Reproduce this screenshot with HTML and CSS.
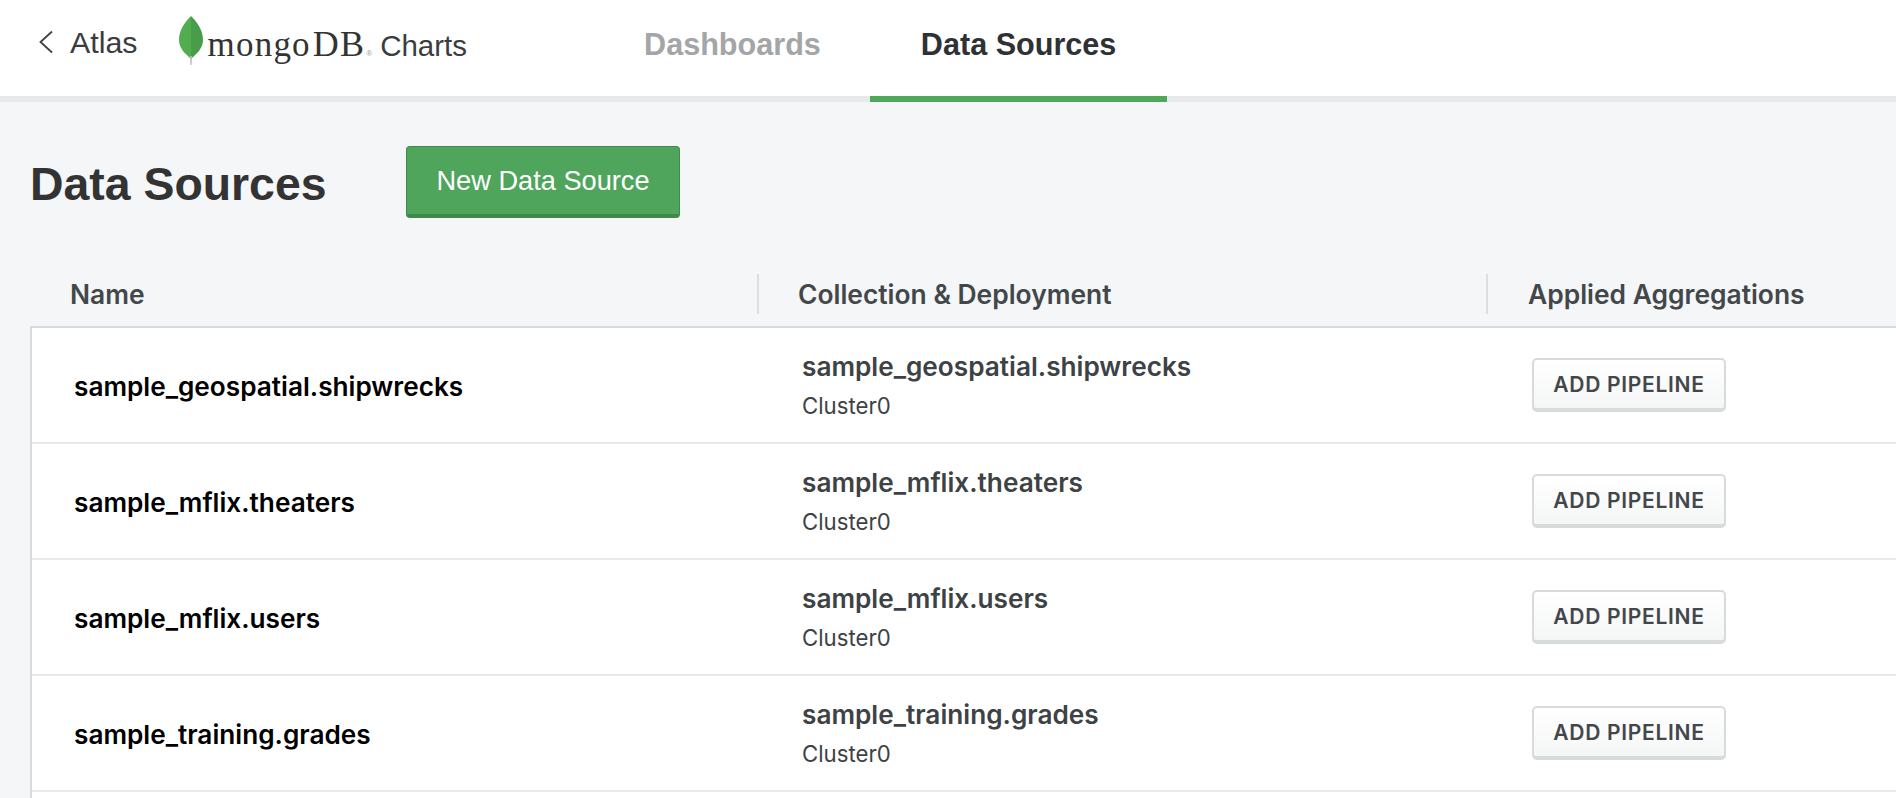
FILE: index.html
```html
<!DOCTYPE html>
<html lang="en">
<head>
    <meta charset="UTF-8">
    <title>Data Sources - MongoDB Charts</title>
    <link rel="stylesheet" href="styles.css">
</head>
<body>
    <header class="topbar">
        <a class="back-link">
            <svg class="back-icon" width="14" height="24" viewBox="0 0 14 24"><path d="M13 1.5 L1.5 12 L13 22.5" fill="none" stroke="#3d4245" stroke-width="1.8"/></svg>
            <span>Atlas</span>
        </a>
        <div class="logo">
            <svg class="leaf" width="24" height="50" viewBox="0 0 24 50">
                <path d="M12 0 C17 5 24 13 24 24 C24 33 17 38 13 42 L12 42 Z" fill="#499d4a"/>
                <path d="M12 0 C7 5 0 13 0 24 C0 33 7 38 11 42 L12 42 Z" fill="#52ad50"/>
                <path d="M11 40 L13 40 L12.5 49 L11.5 49 Z" fill="#b5b8b6"/>
            </svg>
            <span class="logo-word">mongo<span class="logo-db">DB</span></span><span class="logo-reg">®</span>
            <span class="logo-product">Charts</span>
        </div>
        <nav class="tabs">
            <a class="tab">Dashboards</a>
            <a class="tab tab-active">Data Sources</a>
        </nav>
    </header>

    <main class="page">
        <div class="title-row">
            <h1>Data Sources</h1>
            <button class="btn-new">New Data Source</button>
        </div>

        <div class="table-head">
            <div class="head-cell">Name</div>
            <div class="head-cell head-sep">Collection &amp; Deployment</div>
            <div class="head-cell head-sep">Applied Aggregations</div>
        </div>

        <div class="table-body">
            <div class="row">
                <div class="name">sample_geospatial.shipwrecks</div>
                <div class="coll">
                    <div class="coll-name">sample_geospatial.shipwrecks</div>
                    <div class="coll-cluster">Cluster0</div>
                </div>
                <div class="action"><button class="btn-pipeline">ADD PIPELINE</button></div>
            </div>
            <div class="row">
                <div class="name">sample_mflix.theaters</div>
                <div class="coll">
                    <div class="coll-name">sample_mflix.theaters</div>
                    <div class="coll-cluster">Cluster0</div>
                </div>
                <div class="action"><button class="btn-pipeline">ADD PIPELINE</button></div>
            </div>
            <div class="row">
                <div class="name">sample_mflix.users</div>
                <div class="coll">
                    <div class="coll-name">sample_mflix.users</div>
                    <div class="coll-cluster">Cluster0</div>
                </div>
                <div class="action"><button class="btn-pipeline">ADD PIPELINE</button></div>
            </div>
            <div class="row">
                <div class="name">sample_training.grades</div>
                <div class="coll">
                    <div class="coll-name">sample_training.grades</div>
                    <div class="coll-cluster">Cluster0</div>
                </div>
                <div class="action"><button class="btn-pipeline">ADD PIPELINE</button></div>
            </div>
        </div>
    </main>
</body>
</html>
```

FILE: styles.css
```css
html, body {
    height: 100%;
}
body {
    margin: 0;
    display: flex;
    flex-direction: column;
    overflow: hidden;
    font-family: "Inter", "Liberation Sans", sans-serif;
    background-color: #f4f6f8;
    color: #3d4245;
}

/* top bar */
.topbar {
    height: 96px;
    flex: none;
    display: flex;
    background-color: white;
    border-bottom: 6px solid #e7eaea;
}
.back-link {
    display: flex;
    align-items: center;
    height: 84px;
    margin-left: 39px;
    font-family: "Liberation Sans", sans-serif;
    font-size: 30.4px;
    color: #3a3d3f;
}
.back-icon {
    margin-right: 17px;
}
.logo {
    display: flex;
    align-items: baseline;
    margin-left: 41px;
    padding-top: 16px;
    height: 64px;
    line-height: 56px;
}
.leaf {
    align-self: flex-start;
    margin-right: 5px;
}
.logo-word {
    font-family: "Liberation Serif", serif;
    font-size: 35px;
    letter-spacing: 1.2px;
    color: #333;
}
.logo-db {
    font-size: 36px;
    margin-left: 2px;
}
.logo-reg {
    font-family: "Liberation Sans", sans-serif;
    font-size: 8px;
    color: #999;
    margin: 0 8px 0 1px;
}
.logo-product {
    font-family: "Liberation Sans", sans-serif;
    font-size: 29.5px;
    color: #3a3d3f;
}
.tabs {
    display: flex;
    margin-left: 126px;
}
.tab {
    display: flex;
    align-items: center;
    height: 88px;
    padding: 0 51px 8px;
    margin-bottom: -6px;
    font-family: "Liberation Sans", sans-serif;
    font-size: 30.6px;
    font-weight: bold;
    color: #a3a5a7;
    border-bottom: 6px solid transparent;
}
.tab-active {
    margin-left: -2px;
    color: #2f3234;
    border-bottom-color: #4fa85a;
}

/* page */
.page {
    flex: 1;
    display: flex;
    flex-direction: column;
    padding-left: 30px;
}
.title-row {
    display: flex;
    align-items: flex-start;
    padding-top: 44px;
}
h1 {
    margin: 0;
    width: 376px;
    padding-top: 11px;
    font-family: "Liberation Sans", sans-serif;
    font-size: 46.4px;
    line-height: 54px;
    font-weight: bold;
    color: #333;
}
.btn-new {
    width: 274px;
    height: 72px;
    box-sizing: border-box;
    padding-top: 2px;
    font-family: "Liberation Sans", sans-serif;
    font-size: 27.2px;
    color: white;
    background-color: #4fa55c;
    border: 1px solid #3f8a49;
    border-bottom-width: 4px;
    border-radius: 4px;
}

/* table */
.table-head,
.row {
    display: grid;
    grid-template-columns: 727px 729px 1fr;
}
.table-head {
    margin-top: 56px;
    height: 52px;
}
.head-cell {
    height: 40px;
    padding-left: 40px;
    line-height: 41px;
    font-size: 26.4px;
    font-weight: 600;
    color: #43474a;
}
.head-sep {
    border-left: 2px solid #dcdfe0;
    padding-left: 39px;
}
.head-sep:last-child {
    padding-left: 40px;
}
.table-body {
    flex: 1;
    background-color: white;
    border-top: 2px solid #d8dbdc;
    border-left: 2px solid #d8dbdc;
}
.row {
    height: 114px;
    align-items: center;
    border-bottom: 2px solid #e7e9ea;
}
.name {
    padding-left: 42px;
    padding-top: 2px;
    font-size: 26.2px;
    font-weight: 600;
    color: black;
}
.coll {
    padding-left: 43px;
}
.coll-name {
    font-size: 26.2px;
    font-weight: 600;
    color: #3d4245;
}
.coll-cluster {
    margin-top: 10px;
    font-size: 22.2px;
    color: #3d4245;
}
.action {
    padding-left: 44px;
}
.btn-pipeline {
    display: block;
    width: 194px;
    height: 54px;
    box-sizing: border-box;
    font-family: "Inter", sans-serif;
    font-size: 21px;
    font-weight: 600;
    letter-spacing: 0.7px;
    color: #43474a;
    background: linear-gradient(#ffffff, #f5f6f6);
    border: 2px solid #d8dbdc;
    border-bottom-width: 4px;
    border-radius: 5px;
}
```
